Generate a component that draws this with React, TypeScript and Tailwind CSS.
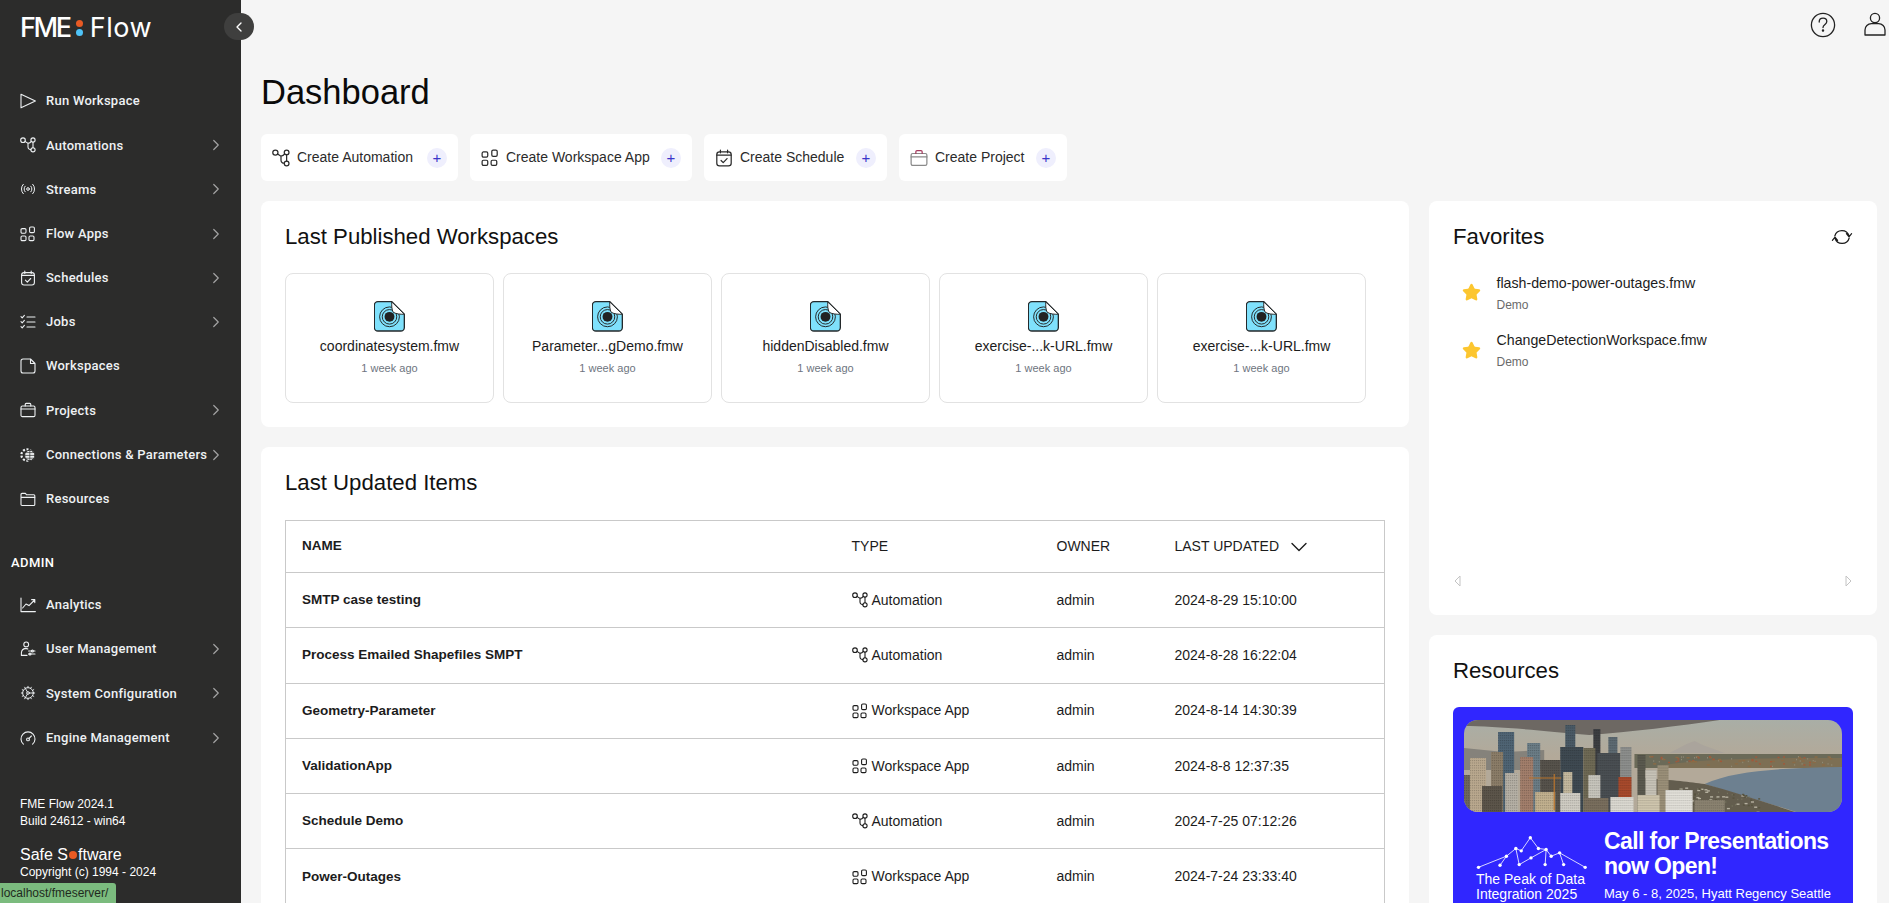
import { ChevronDown, ChevronLeft, ChevronRight, Cog, Radio, Star } from "lucide-react";
import type { ReactNode } from "react";

const sans = "font-['Liberation_Sans',Arial,sans-serif]";

function Icon({ children, size = 16 }: { children: ReactNode; size?: number }) {
  return (
    <svg width={size} height={size} viewBox="0 0 16 16" fill="none" stroke="currentColor" strokeWidth={1.1} strokeLinecap="round" strokeLinejoin="round" className="shrink-0">
      {children}
    </svg>
  );
}

const PlayIcon = () => (
  <Icon>
    <path d="M1 1.2v13.6L15.4 8z" />
  </Icon>
);
const FlowIcon = ({ size }: { size?: number }) => (
  <Icon size={size}>
    <circle cx="3" cy="3.2" r="2.3" />
    <circle cx="13" cy="3" r="2.1" />
    <circle cx="13" cy="12.8" r="2.1" />
    <path d="M5 4.4l3 2v3.6a2.6 2.6 0 0 0 2.9 2.6M8 6.4c1-.1 2.4-.6 3.3-2M13 5.1v5.6" />
  </Icon>
);
const AppsIcon = ({ size }: { size?: number }) => (
  <Icon size={size}>
    <rect x="1" y="2.6" width="5" height="4.6" rx="1.2" />
    <rect x="9.6" y="1" width="4.8" height="5.6" rx="1.2" />
    <rect x="1" y="10" width="5" height="4.6" rx="1.2" />
    <rect x="9" y="10" width="5" height="4.6" rx="1.2" />
  </Icon>
);
const CalIcon = ({ size }: { size?: number }) => (
  <Icon size={size}>
    <rect x="1.6" y="2.6" width="12.8" height="12.4" rx="2.4" />
    <path d="M4.8 1v2.4M11.2 1v2.4M1.6 5.4h12.8M5.4 10.2l1.9 1.9 3.4-3.6" />
  </Icon>
);
const JobsIcon = () => (
  <Icon>
    <path d="M1 2.6l1.2 1.2 2.2-2.4M1 7.6l1.2 1.2 2.2-2.4M1 12.6l1.2 1.2 2.2-2.4M7 3h8M7 8h8M7 13h8" />
  </Icon>
);
const FileIcon = () => (
  <Icon>
    <path d="M3 1h7.5L15 5.5V13a2 2 0 0 1-2 2H3a2 2 0 0 1-2-2V3a2 2 0 0 1 2-2zM10.5 1v4.5H15" />
  </Icon>
);
const CaseIcon = ({ size, top }: { size?: number; top?: string }) => (
  <Icon size={size}>
    <rect x="1" y="4" width="14" height="10.6" rx="1.4" />
    <path d="M1 7h14" />
    <path d="M5.2 4V2.4a1 1 0 0 1 1-1h3.6a1 1 0 0 1 1 1V4" stroke={top ?? "currentColor"} />
  </Icon>
);
const ConnIcon = () => (
  <Icon>
    <circle cx="7" cy="8" r="5.6" strokeWidth={2.2} strokeDasharray="2 1.6" strokeLinecap="butt" />
    <circle cx="9.8" cy="8.4" r="5.2" fill="currentColor" stroke="#2c2c2b" strokeWidth={1} />
    <path d="M4.8 8.4h10M9.8 3.4v10M6 5.6h7.6M6 11.2h7.6" stroke="#2c2c2b" strokeWidth={0.7} />
  </Icon>
);
const FolderIcon = () => (
  <Icon>
    <path d="M1 13.5V3.4a1 1 0 0 1 1-1h3.4l1.2 1.4h7.2a1 1 0 0 1 1 1v8.7a1 1 0 0 1-1 1H2a1 1 0 0 1-1-1zM1 6.4h14" />
  </Icon>
);
const ChartIcon = () => (
  <Icon>
    <path d="M1 1v13.6h14.4M2.6 11L6 7l3 1.6 5.6-5.6M11.6 2.6h3.2v3" />
  </Icon>
);
const UserCogIcon = () => (
  <Icon>
    <circle cx="6.2" cy="3.4" r="2.4" />
    <path d="M7 14.4H1.4v-2.6a4.8 4.8 0 0 1 4.2-4.4c1 0 1.6.2 2.2.6M8.6 10h6.4M8.6 13h6.4" />
    <circle cx="12.4" cy="10" r="1" />
    <circle cx="10" cy="13" r="1" />
  </Icon>
);
const GaugeIcon = () => (
  <Icon>
    <path d="M3.4 14.2A7 7 0 1 1 12.6 14.2" />
    <circle cx="8" cy="9.4" r="1.4" />
    <path d="M9 8.4l2.4-2.4" />
  </Icon>
);

function FmwIcon() {
  return (
    <svg width="31" height="31" viewBox="0 0 94 94" className="shrink-0">
      <path d="M12 2h42l38 38v40a11 11 0 0 1-11 11H12A11 11 0 0 1 1 80V13A11 11 0 0 1 12 2z" fill="#7fe1fc" stroke="#24292b" strokeWidth="4" />
      <circle cx="47" cy="48" r="15" fill="#222" />
      <circle cx="47" cy="48" r="22" fill="none" stroke="#24292b" strokeWidth="3" />
      <circle cx="47" cy="48" r="30" fill="none" stroke="#24292b" strokeWidth="3" />
      <path d="M54 3l38 37c-12 1-26-1-34-6-4-8-5-20-4-31z" fill="#fff" stroke="#24292b" strokeWidth="3" strokeLinejoin="round" />
    </svg>
  );
}

const nav: { label: string; icon: ReactNode; more?: boolean }[] = [
  { label: "Run Workspace", icon: <PlayIcon /> },
  { label: "Automations", icon: <FlowIcon />, more: true },
  { label: "Streams", icon: <Radio size={16} strokeWidth={1.5} className="shrink-0" />, more: true },
  { label: "Flow Apps", icon: <AppsIcon />, more: true },
  { label: "Schedules", icon: <CalIcon />, more: true },
  { label: "Jobs", icon: <JobsIcon />, more: true },
  { label: "Workspaces", icon: <FileIcon /> },
  { label: "Projects", icon: <CaseIcon />, more: true },
  { label: "Connections & Parameters", icon: <ConnIcon />, more: true },
  { label: "Resources", icon: <FolderIcon /> },
];

const adminNav: { label: string; icon: ReactNode; more?: boolean }[] = [
  { label: "Analytics", icon: <ChartIcon /> },
  { label: "User Management", icon: <UserCogIcon />, more: true },
  { label: "System Configuration", icon: <Cog size={16} strokeWidth={1.4} className="shrink-0" />, more: true },
  { label: "Engine Management", icon: <GaugeIcon />, more: true },
];

const published = ["coordinatesystem.fmw", "Parameter...gDemo.fmw", "hiddenDisabled.fmw", "exercise-...k-URL.fmw", "exercise-...k-URL.fmw"];

const rows = [
  { name: "SMTP case testing", type: "Automation", date: "2024-8-29 15:10:00" },
  { name: "Process Emailed Shapefiles SMPT", type: "Automation", date: "2024-8-28 16:22:04" },
  { name: "Geometry-Parameter", type: "Workspace App", date: "2024-8-14 14:30:39" },
  { name: "ValidationApp", type: "Workspace App", date: "2024-8-8 12:37:35" },
  { name: "Schedule Demo", type: "Automation", date: "2024-7-25 07:12:26" },
  { name: "Power-Outages", type: "Workspace App", date: "2024-7-24 23:33:40" },
];

const favorites = ["flash-demo-power-outages.fmw", "ChangeDetectionWorkspace.fmw"];

const buildings = [
  [34, 12, 16, "#4f6474"], [101, 5, 10, "#4a5a66"], [129, 9, 7, "#3d3f42"], [144, 17, 9, "#5d6a72"],
  [63, 23, 13, "#6b7d86"], [96, 27, 23, "#3f4a52"], [119, 28, 12, "#6f6a55"], [133, 33, 23, "#4a4f53"],
  [156, 27, 11, "#8d8f8d"], [173, 35, 8, "#5b5a4f"], [6, 38, 16, "#b9a88e"], [27, 32, 12, "#8b7d68"],
  [0, 55, 6, "#6e675c"], [56, 37, 13, "#a37f6c"], [76, 40, 20, "#57534c"], [193, 45, 11, "#9b9079"], [181, 50, 11, "#c8c4b8"],
  [154, 57, 13, "#a84a2c"], [124, 55, 12, "#c8c6bd"], [99, 52, 9, "#c4b99f"], [41, 53, 13, "#b5b0a5"],
  [18, 66, 20, "#5c554a"], [71, 72, 20, "#c2b18f"], [96, 73, 20, "#d0cdc4"], [146, 77, 23, "#dcdad2"],
  [173, 75, 22, "#cfc6ae"], [201, 70, 27, "#e2e0d9"], [120, 78, 24, "#7a6f5e"], [230, 80, 30, "#8a8270"],
] as const;

// scattered specks for the far shore and the low blocks in front
const specks = Array.from({ length: 170 }, (_, i) => {
  const a = (i * i * 13 + i * 7) % 101;
  const b = (i * i * 5 + i * 11) % 29;
  const shore = i % 2 === 0;
  return {
    x: shore ? 185 + a * 1.85 : 215 + a * 0.8,
    y: shore ? 36 + b * 0.36 : 66 + b * 0.8 + a * 0.1,
    w: 1 + (i % 3),
    c: ["#8f8a76", "#57533f", "#8c6a45", "#76745f", "#a2583a", "#b5b09f"][i % 6],
  };
});

function City() {
  return (
    <svg viewBox="0 0 377 92" preserveAspectRatio="none" className="block w-full h-full">
      <defs>
        <linearGradient id="sky" x1="0" y1="0" x2="0" y2="1">
          <stop offset="0" stopColor="#a9aea6" />
          <stop offset="0.4" stopColor="#b3a999" />
        </linearGradient>
        <pattern id="win" width="2" height="2.5" patternUnits="userSpaceOnUse">
          <rect width="1" height="1" fill="#000" opacity="0.22" />
        </pattern>
      </defs>
      <rect width="377" height="92" fill="url(#sky)" />
      <path d="M0 0h255c-40 6-90 12-130 15C70 10 30 6 0 6z" fill="#6d6863" />
      <path d="M205 33l17-9 8-3 8 4 22 8z" fill="#aaa49c" />
      <path d="M0 28l40 4 40-2v20H0z" fill="#85827b" />
      <path d="M170 34h207v14H170z" fill="#6b6a58" />
      <path d="M195 46c40-8 110-8 182-8v10H200z" fill="#7d6f54" />
      <path d="M240 64c30-14 80-16 137-17v45h-46c-30-10-60-18-91-28z" fill="#6d8090" />
      <path d="M180 92V58c30 2 45 4 60 6 30 8 60 18 90 28z" fill="#635d4e" />
      {specks.map((s, i) => (
        <rect key={i} x={s.x} y={s.y} width={s.w} height="1.4" fill={s.c} />
      ))}
      {buildings.map(([x, y, w, c], i) => (
        <g key={i}>
          <rect x={x} y={y} width={w} height={92 - y} fill={c} />
          <rect x={x} y={y} width={w} height={92 - y} fill="url(#win)" />
        </g>
      ))}
      <path d="M65 58h32M90 54v36" stroke="#b8742c" strokeWidth="1.2" />
    </svg>
  );
}

function PeakGraph() {
  const pts: [number, number][] = [[177, 736], [260, 703], [288, 680], [304, 687], [331, 648], [355, 680], [378, 683], [393, 703], [418, 693], [494, 736], [241, 730], [298, 728], [333, 708], [375, 728], [430, 728]];
  return (
    <svg width="112" height="35" viewBox="170 640 332 104" className="block">
      <path d="M177 736L260 703L288 680L304 687L331 648L355 680L378 683L393 703L418 693L494 736M260 703L241 730M288 680L298 728L333 708L378 683L375 728M418 693L430 728" fill="none" stroke="#fff" strokeWidth="2.4" />
      {pts.map(([x, y], i) => (
        <circle key={i} cx={x} cy={y} r="5" fill="#fff" />
      ))}
    </svg>
  );
}

function NavItem({ label, icon, more }: { label: string; icon: ReactNode; more?: boolean }) {
  return (
    <div className="h-[44.2px] pl-[20px] pr-[18px] flex items-center text-[#eef1f3]">
      {icon}
      <span className="ml-[10px] text-[13px] font-medium tracking-[0.25px] whitespace-nowrap">{label}</span>
      {more && <ChevronRight size={18} strokeWidth={1.6} className="ml-auto -mr-[2px] shrink-0 text-[#a3a3a3]" />}
    </div>
  );
}

function Sidebar() {
  return (
    <aside className="w-[241px] shrink-0 bg-[#2c2c2b] text-white font-['Roboto',sans-serif]">
      <div className="h-[79px] pl-[20px] pt-[13px] flex items-start">
        <div className="flex items-center font-['Inter',sans-serif] text-[27px] leading-[30px] font-medium">
          <span className="tracking-[-2.4px]">FME</span>
          <span className="flex flex-col gap-[2px] ml-[6px] mr-[7px]">
            <span className="w-[7px] h-[7px] rounded-full bg-[#e85a24]" />
            <span className="w-[7px] h-[7px] rounded-full bg-[#4fc3f7]" />
          </span>
          <span className="font-normal tracking-[0.6px]">Flow</span>
        </div>
      </div>
      {nav.map((n) => (
        <NavItem key={n.label} {...n} />
      ))}
      <div className="mt-[32px] pl-[11px] h-[20px] leading-[20px] text-[13px] font-medium tracking-[0.4px]">ADMIN</div>
      <div className="mt-[10px]">
        {adminNav.map((n) => (
          <NavItem key={n.label} {...n} />
        ))}
      </div>
      <div className={`mt-[36px] pl-[20px] text-[12px] leading-[17px] ${sans}`}>
        <div>FME Flow 2024.1</div>
        <div>Build 24612 - win64</div>
        <div className="mt-[15px] text-[16px] leading-[20px] flex items-center">
          Safe S<span className="inline-block w-[8px] h-[8px] rounded-full bg-[#e85a24] mx-[1px]" />ftware
        </div>
        <div className="leading-[14px]">Copyright (c) 1994 - 2024</div>
      </div>
    </aside>
  );
}

function ActionButton({ label, icon, width }: { label: string; icon: ReactNode; width: string }) {
  return (
    <div className={`${width} h-[47px] bg-white rounded-[6px] pl-[11px] pr-[11px] flex items-center text-[#2b2b2b]`}>
      {icon}
      <span className="ml-[7px] text-[14px] whitespace-nowrap">{label}</span>
      <span className="ml-auto w-[20px] h-[20px] rounded-full bg-[#efeffd] text-[#3a35c9] text-[15px] leading-[20px] text-center">+</span>
    </div>
  );
}

function Card({ title, className, children }: { title: string; className?: string; children: ReactNode }) {
  return (
    <section className={`bg-white rounded-[8px] px-[24px] pt-[22px] ${className ?? ""}`}>
      <h2 className="text-[22.2px] leading-[28px] text-[#111]">{title}</h2>
      {children}
    </section>
  );
}

export default function App() {
  return (
    <div className={`relative flex h-[903px] overflow-hidden bg-[#f5f5f5] text-[#1c1c1c] ${sans}`}>
      <Sidebar />
      <button className="absolute left-[224px] top-[13px] w-[30px] h-[27px] rounded-full bg-[#3f3f3e] text-white flex items-center justify-center">
        <ChevronLeft size={16} strokeWidth={2} />
      </button>

      <main className="flex-1 min-w-0 pl-[20px] pr-[12px]">
        <header className="h-[48px] flex items-start justify-end pt-[12px] gap-[28px] -mr-[9px] text-[#222]">
          <svg width="26" height="26" viewBox="0 0 26 26" fill="none" stroke="currentColor" strokeWidth="1.3" strokeLinecap="round">
            <circle cx="13" cy="13" r="11.6" />
            <path d="M9.2 10c0-2.4 1.8-3.8 3.9-3.8s3.7 1.4 3.7 3.4c0 2.8-3.8 3-3.8 6" />
            <circle cx="13" cy="18.6" r="0.6" fill="currentColor" />
          </svg>
          <svg width="22" height="24" viewBox="0 0 22 24" fill="none" stroke="currentColor" strokeWidth="1.3">
            <circle cx="11" cy="6" r="4.6" />
            <path d="M1 23v-5a6.4 6.4 0 0 1 6.4-6.4h7.2A6.4 6.4 0 0 1 21 18v5z" strokeLinejoin="round" />
          </svg>
        </header>

        <h1 className="mt-[24px] text-[34.5px] leading-[40px] text-[#0a0a0a]">Dashboard</h1>

        <div className="mt-[22px] flex gap-[12px]">
          <ActionButton width="w-[197px]" label="Create Automation" icon={<FlowIcon size={18} />} />
          <ActionButton width="w-[222px]" label="Create Workspace App" icon={<AppsIcon size={18} />} />
          <ActionButton width="w-[183px]" label="Create Schedule" icon={<CalIcon size={18} />} />
          <ActionButton width="w-[168px]" label="Create Project" icon={<span className="text-[#8a8a8a]"><CaseIcon size={18} top="#a63a5e" /></span>} />
        </div>

        <div className="mt-[20px] flex gap-[20px]">
          <div className="w-[1148px] shrink-0 flex flex-col gap-[20px]">
            <Card title="Last Published Workspaces" className="h-[226px]">
              <div className="mt-[22px] flex gap-[9px]">
                {published.map((p, i) => (
                  <div key={i} className="w-[209px] h-[130px] border border-[#e2e2e2] rounded-[8px] flex flex-col items-center pt-[27px]">
                    <FmwIcon />
                    <div className="mt-[4px] text-[14px] leading-[20px]">{p}</div>
                    <div className="mt-[4px] text-[11px] leading-[16px] text-[#6e7480]">1 week ago</div>
                  </div>
                ))}
              </div>
            </Card>

            <Card title="Last Updated Items" className="h-[480px]">
              <table className="mt-[23px] w-[1100px] table-fixed border border-[#c9c9c9] border-collapse text-[14px]">
                <colgroup>
                  <col className="w-[566px]" />
                  <col className="w-[205px]" />
                  <col className="w-[118px]" />
                  <col />
                </colgroup>
                <thead>
                  <tr className="h-[52px] text-left">
                    <th className="pl-[16px] font-bold text-[13.5px]">NAME</th>
                    <th className="font-normal">TYPE</th>
                    <th className="font-normal">OWNER</th>
                    <th className="font-normal">
                      <span className="flex items-center gap-[6px]">
                        LAST UPDATED
                        <ChevronDown size={28} strokeWidth={1.2} />
                      </span>
                    </th>
                  </tr>
                </thead>
                <tbody>
                  {rows.map((r) => (
                    <tr key={r.name} className="h-[55.3px] border-t border-[#c9c9c9]">
                      <td className="pl-[16px] font-bold text-[13.5px]">{r.name}</td>
                      <td>
                        <span className="flex items-center gap-[4px]">
                          {r.type === "Automation" ? <FlowIcon /> : <AppsIcon />}
                          {r.type}
                        </span>
                      </td>
                      <td>admin</td>
                      <td>{r.date}</td>
                    </tr>
                  ))}
                </tbody>
              </table>
            </Card>
          </div>

          <div className="w-[448px] shrink-0 flex flex-col gap-[20px]">
            <section className="h-[414px] bg-white rounded-[8px] px-[24px] pt-[22px] flex flex-col">
              <div className="flex items-center justify-between">
                <h2 className="text-[22.2px] leading-[28px] text-[#111]">Favorites</h2>
                <svg width="22" height="18" viewBox="0 0 22 18" fill="none" stroke="currentColor" strokeWidth="1.2" strokeLinecap="round" strokeLinejoin="round">
                  <path d="M3.8 8A7.4 7.4 0 0 1 18 7.8M20.6 5.6L18 8.8 15.4 5.6" />
                  <path d="M18.2 10A7.4 7.4 0 0 1 4 10.2M1.4 12.4L4 9.2l2.6 3.2" />
                </svg>
              </div>
              <div className="mt-[21px] flex flex-col gap-[16.5px] pl-[9px]">
                {favorites.map((f) => (
                  <div key={f} className="flex items-center h-[41px]">
                    <Star size={19} fill="#fcc630" stroke="#fcc630" className="shrink-0" />
                    <div className="ml-[15.5px]">
                      <div className="text-[14.2px] leading-[20px]">{f}</div>
                      <div className="mt-[4px] text-[12px] leading-[16px] text-[#6a6a6a]">Demo</div>
                    </div>
                  </div>
                ))}
              </div>
              <div className="mt-auto mb-[28px] flex justify-between px-[1px] text-[#c4c4c4]">
                <svg width="7" height="12" viewBox="0 0 7 12" fill="none" stroke="currentColor"><path d="M6 1L1 6l5 5z" /></svg>
                <svg width="7" height="12" viewBox="0 0 7 12" fill="none" stroke="currentColor"><path d="M1 1l5 5-5 5z" /></svg>
              </div>
            </section>

            <Card title="Resources" className="h-[400px]">
              <div className="mt-[22px] h-[240px] bg-[#3026ff] rounded-[6px] pt-[13px] px-[11px] text-white">
                <div className="h-[92px] rounded-[14px] overflow-hidden">
                  <City />
                </div>
                <div className="flex mt-[19px]">
                  <div className="w-[129px] pl-[12px] pt-[4px] shrink-0">
                    <PeakGraph />
                    <div className="mt-[2px] text-[14px] leading-[15px] whitespace-nowrap">
                      The Peak of Data
                      <br />
                      Integration 2025
                    </div>
                  </div>
                  <div className="ml-[11px] -mt-[2px]">
                    <div className="text-[23px] leading-[25px] font-bold tracking-[-0.6px] whitespace-nowrap">
                      Call for Presentations
                      <br />
                      now Open!
                    </div>
                    <div className="mt-[6px] text-[13px] leading-[18px] whitespace-nowrap">May 6 - 8, 2025, Hyatt Regency Seattle</div>
                  </div>
                </div>
              </div>
            </Card>
          </div>
        </div>
      </main>

      <div className="absolute left-0 bottom-0 w-[116px] h-[20px] bg-[#7bbb7e] rounded-tr-[3px] pl-[1px] text-[12px] leading-[20px] text-[#1f2a20] whitespace-nowrap">localhost/fmeserver/</div>
    </div>
  );
}
